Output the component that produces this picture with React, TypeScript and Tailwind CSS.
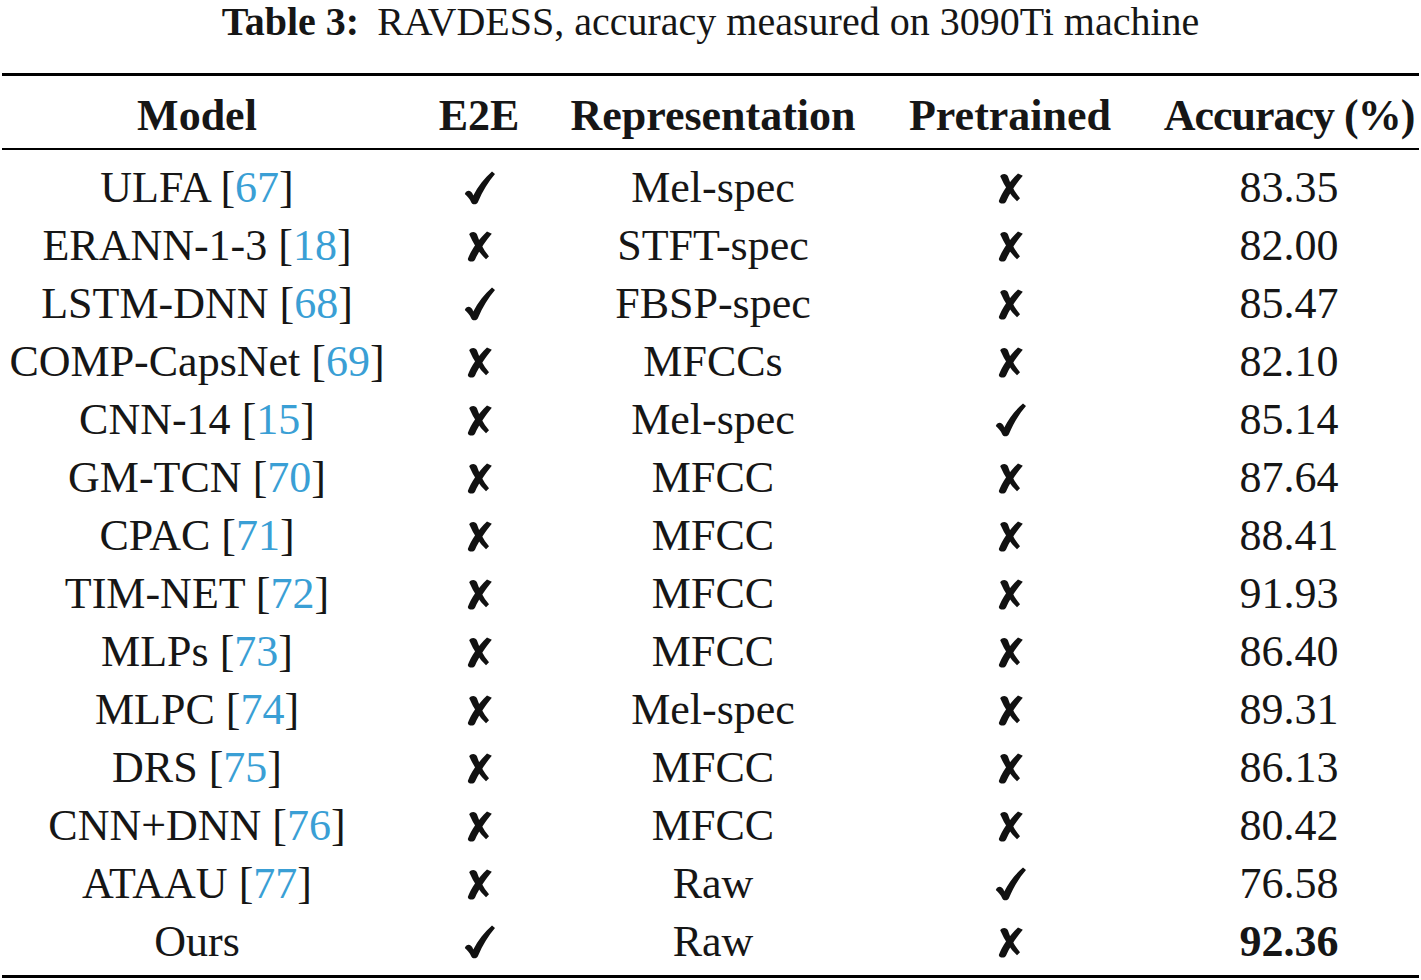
import React from "react";

type Row = {
  model: string;
  cite: string;
  e2e: boolean;
  rep: string;
  pre: boolean;
  acc: string;
  best?: boolean;
};

const rows: Row[] = [
  { model: "ULFA", cite: "67", e2e: true, rep: "Mel-spec", pre: false, acc: "83.35" },
  { model: "ERANN-1-3", cite: "18", e2e: false, rep: "STFT-spec", pre: false, acc: "82.00" },
  { model: "LSTM-DNN", cite: "68", e2e: true, rep: "FBSP-spec", pre: false, acc: "85.47" },
  { model: "COMP-CapsNet", cite: "69", e2e: false, rep: "MFCCs", pre: false, acc: "82.10" },
  { model: "CNN-14", cite: "15", e2e: false, rep: "Mel-spec", pre: true, acc: "85.14" },
  { model: "GM-TCN", cite: "70", e2e: false, rep: "MFCC", pre: false, acc: "87.64" },
  { model: "CPAC", cite: "71", e2e: false, rep: "MFCC", pre: false, acc: "88.41" },
  { model: "TIM-NET", cite: "72", e2e: false, rep: "MFCC", pre: false, acc: "91.93" },
  { model: "MLPs", cite: "73", e2e: false, rep: "MFCC", pre: false, acc: "86.40" },
  { model: "MLPC", cite: "74", e2e: false, rep: "Mel-spec", pre: false, acc: "89.31" },
  { model: "DRS", cite: "75", e2e: false, rep: "MFCC", pre: false, acc: "86.13" },
  { model: "CNN+DNN", cite: "76", e2e: false, rep: "MFCC", pre: false, acc: "80.42" },
  { model: "ATAAU", cite: "77", e2e: false, rep: "Raw", pre: true, acc: "76.58" },
  { model: "Ours", cite: "", e2e: true, rep: "Raw", pre: false, acc: "92.36", best: true },
];

// dingbat-style check / cross
function Check() {
  return (
    <svg width="31" height="34" viewBox="0 0 31 34" aria-label="yes">
      <path
        d="M28 0.5 L31 3 C24.5 10.5 18.5 20 14 31 C13 33.8 8.5 34.2 7.3 31.5 C5.8 28 3.8 25.5 0.8 23 C2.3 19 6.3 18.5 8.3 22.3 L9.3 24.5 C14 15 20.5 7 28 0.5 Z"
        fill="#111"
      />
    </svg>
  );
}

function Cross() {
  return (
    <svg width="25" height="31" viewBox="0 0 25 31" aria-label="no">
      <path
        d="M20 0.5 L24.8 2.8 C18.5 10.3 12 19.8 8 28.7 C6.8 31.3 1.2 31.3 0.8 28 C4 19.2 10.8 9.3 20 0.5 Z"
        fill="#111"
      />
      <path
        d="M2.2 3.2 C4.2 -0.2 9 0.3 10 3.6 C12.5 11 16 18.3 22 25.3 L19 28.2 C12.3 22 6.8 13.6 2.2 3.2 Z"
        fill="#111"
      />
    </svg>
  );
}

const cols = "grid grid-cols-[390px_174px_294px_300px_258px] items-center";

export default function App() {
  return (
    <div className="w-[1421px] h-[980px] bg-white text-[#161616] overflow-hidden" style={{ fontFamily: '"Liberation Serif", "Times New Roman", serif' }}>
      <div className="h-[44px] flex items-center justify-center text-[40px] leading-[44px]">
        <span className="font-bold">Table 3:</span>
        <span className="ml-[18px]">RAVDESS, accuracy measured on 3090Ti machine</span>
      </div>

      <div className="px-[2px] pt-[29px]">
        <div className="h-[2.5px] bg-black" />
        <div className={`${cols} h-[72px] text-[44px] font-bold leading-none pt-[8px]`}>
          <div className="text-center">Model</div>
          <div className="text-center">E2E</div>
          <div className="text-center">Representation</div>
          <div className="text-center">Pretrained</div>
          <div className="text-center whitespace-nowrap tracking-[-1px]">Accuracy (%)</div>
        </div>
        <div className="h-[2.5px] bg-black" />

        <div className="pt-[9px] pb-[4px]">
          {rows.map((r) => (
            <div key={r.model} className={`${cols} h-[58px] text-[44px] leading-none`}>
              <div className="text-center whitespace-nowrap">
                {r.model}
                {r.cite ? (
                  <>
                    {" "}[<span className="text-[#3a9fd5]">{r.cite}</span>]
                  </>
                ) : null}
              </div>
              <div className="flex justify-center">{r.e2e ? <Check /> : <Cross />}</div>
              <div className="text-center">{r.rep}</div>
              <div className="flex justify-center">{r.pre ? <Check /> : <Cross />}</div>
              <div className={`text-center ${r.best ? "font-bold" : ""}`}>{r.acc}</div>
            </div>
          ))}
        </div>
        <div className="h-[2.5px] bg-black" />
      </div>
    </div>
  );
}
